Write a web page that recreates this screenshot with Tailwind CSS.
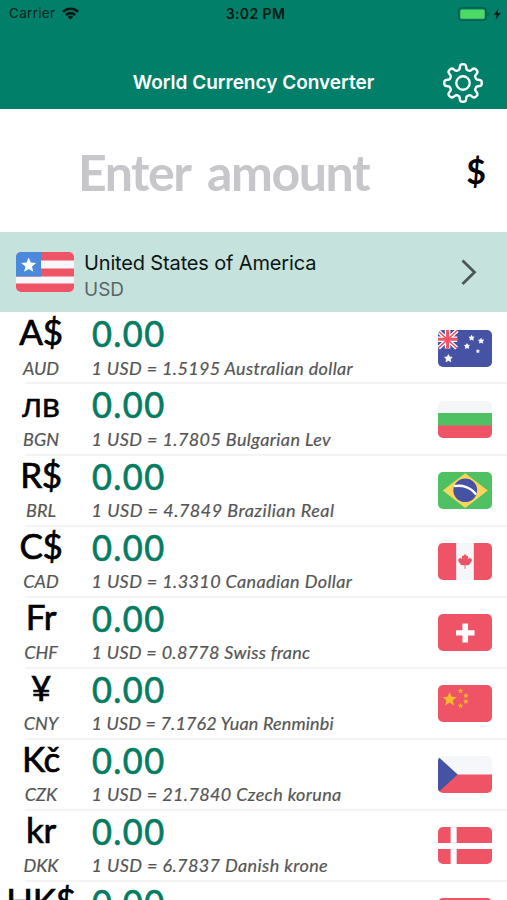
<!DOCTYPE html>
<html lang="en">
<head>
    <meta charset="UTF-8">
    <meta name="viewport" content="width=device-width, initial-scale=1.0">
    <title>World Currency Converter</title>
    <script src="https://cdn.jsdelivr.net/npm/@tailwindcss/browser@4"></script>
</head>
<body class="bg-white font-['Inter',sans-serif] h-[900px] overflow-hidden flex flex-col">
    <!-- Header -->
    <header class="bg-[#027f68] h-[109px] shrink-0 flex flex-col">
        <!-- Status bar -->
        <div class="h-[27px] grid grid-cols-3 items-center pl-[9px] pr-[5px] text-[13.5px] text-[#04251f]">
            <div class="flex items-center gap-[7px]">
                <span class="tracking-[0.3px]">Carrier</span>
                <svg class="w-[17px] h-[13px]" viewBox="0 0 17 13" fill="none" stroke="#031a16" stroke-width="2.6">
                    <path d="M.9 4.9a10.8 10.8 0 0 1 15.2 0"/>
                    <path d="M3.9 8a6.6 6.6 0 0 1 9.2 0"/>
                    <path d="M8.5 12.6 5.8 9.9a3.9 3.9 0 0 1 5.4 0z" fill="#031a16" stroke="none"/>
                </svg>
            </div>
            <span class="text-center font-semibold text-[14px] tracking-[0.4px] whitespace-nowrap text-[#031a16]">3:02 PM</span>
            <div class="flex items-center justify-end">
                <svg class="w-[44px] h-[14px]" viewBox="0 0 44 14">
                    <rect x=".7" y=".9" width="27.4" height="12.4" rx="3" fill="none" stroke="#03594a" stroke-width="1.3"/>
                    <rect x="2.3" y="2.4" width="24.4" height="9.4" rx="1.5" fill="#4cd964"/>
                    <path d="M29.6 5v4.2c1.6-.6 1.6-3.6 0-4.2z" fill="#03594a"/>
                    <path d="M40.6 1.5 35.7 8h3.1l-1.3 4.7 5.2-6.6h-3.2z" fill="#031a16"/>
                </svg>
            </div>
        </div>
        <!-- Title bar -->
        <div class="flex-1 grid grid-cols-[1fr_auto_1fr] items-center pt-[29px]">
            <span></span>
            <h1 class="text-white text-[19px] font-semibold leading-none whitespace-nowrap">World Currency Converter</h1>
            <svg class="w-[42px] h-[42px] justify-self-end mr-[23px]" viewBox="-21 -21 42 42" fill="none" stroke="#fff" stroke-width="2.4" stroke-linejoin="round">
                <circle r="6.7"/>
                <path id="gear"/>
            </svg>
        </div>
    </header>

    <!-- Amount -->
    <section class="h-[123px] shrink-0 flex items-center font-['Lato',sans-serif]">
        <div class="w-[447px] text-center pt-[3px] text-[50px] font-bold text-[#c7c7cb] tracking-[-1.45px] [word-spacing:7px] whitespace-nowrap">Enter amount</div>
        <div class="flex-1 text-center pr-0.5 text-[34px] font-bold text-black">$</div>
    </section>

    <!-- Base currency -->
    <section class="bg-[#c6e2dc] h-20 shrink-0 flex items-center pl-4 pr-[30px]">
        <svg class="w-[58px] h-[40px] rounded-[5px]" viewBox="0 0 58 40">
            <path d="M0 0h58v40H0z" fill="#f7f7fa"/>
            <path d="M0 0h58v8.5H0zM0 16.5h58v8H0zM0 31.5h58V40H0z" fill="#ee5366"/>
            <path d="M0 0h25v24.5H0z" fill="#4a89dc"/>
            <path d="M12.7 5.5l2.1 5 5.3.4-4.1 3.5 1.3 5.3-4.6-2.8-4.6 2.8 1.3-5.3-4.1-3.5 5.3-.4z" fill="#fff"/>
        </svg>
        <div class="flex-1 pl-2.5 pt-[9px]">
            <p class="text-[20px] leading-[27px] tracking-[-0.15px] text-[#0b1513]">United States of America</p>
            <p class="text-[19px] leading-[26px] text-[#5b6765]">USD</p>
        </div>
        <svg class="w-[16px] h-[28px]" viewBox="0 0 16 28" fill="none" stroke="#4c5755" stroke-width="2.8">
            <path d="M1.5 2.5 13.5 14.3 1.5 26"/>
        </svg>
    </section>

    <!-- Rates -->
    <main id="rates" class="flex-1 min-h-0 overflow-hidden pt-[1.4px] font-['Lato',sans-serif]"></main>

    <script>
        // Flag artwork, all drawn on a 54x37 box
        const flags = {
            AUD: '<path d="M0 0h54v37H0z" fill="#4653a5"/><path d="M0 1 18.5 18M19 .5 .5 18" stroke="#fff" stroke-width="4"/><path d="M9.5 0v18.5M0 9.3h19" stroke="#fff" stroke-width="5.5"/><path d="M0 1 18.5 18M19 .5 .5 18" stroke="#ee5366" stroke-width="1.6"/><path d="M9.5 0v18.5M0 9.3h19" stroke="#ee5366" stroke-width="3"/>' +
                '<path d="M10.3 24.6l1.2 2.3 2.6.4-1.9 1.8.5 2.6-2.4-1.3-2.4 1.3.5-2.6-1.9-1.8 2.6-.4z" fill="#fff" stroke="#fff" stroke-width=".7"/><path d="M33.3 5.3l.8 1.6 1.8.2-1.3 1.3.3 1.8-1.6-.9-1.6.9.3-1.8-1.3-1.3 1.8-.2zM42.7 8.3l.8 1.6 1.8.2-1.3 1.3.3 1.8-1.6-.9-1.6.9.3-1.8-1.3-1.3 1.8-.2zM28.7 13.6l.8 1.6 1.8.2-1.3 1.3.3 1.8-1.6-.9-1.6.9.3-1.8-1.3-1.3 1.8-.2z" fill="#fff" stroke="#fff" stroke-width=".7"/><path d="M39.5 19.4l.5 1.1 1.2.2-.9.8.2 1.2-1-.6-1 .6.2-1.2-.9-.8 1.2-.2z" fill="#fff" stroke="#fff" stroke-width=".5"/>',
            BGN: '<path d="M0 0h54v13H0z" fill="#f5f6f8"/><path d="M0 12h54v13H0z" fill="#4fc162"/><path d="M0 24.5h54V37H0z" fill="#ee5366"/>',
            BRL: '<path d="M0 0h54v37H0z" fill="#4fc162"/><path d="M27 1.3 49.3 18.5 27 36 4.7 18.5z" fill="#fbd45c"/><circle cx="27" cy="18.3" r="11.8" fill="#4653a5"/><path d="M16 14.2c8-1.8 17 1.4 21.7 8.3" fill="none" stroke="#fff" stroke-width="2.4"/>',
            CAD: '<path d="M0 0h54v37H0z" fill="#f5f6f8"/><path d="M0 0h18v37H0zM35.5 0H54v37H35.5z" fill="#ee5366"/><path d="M26.8 11l1.8 2 1.3-.3-.2 3.2 1.8-1.2 2.3 2-.9 2.2-2.3 3.1-3.4.2.1 3.6h-1l.1-3.6-3.4-.2-2.3-3.1-.9-2.2 2.3-2 1.8 1.2-.2-3.2 1.3.3z" fill="#ee5366"/>',
            CHF: '<path d="M0 0h54v37H0z" fill="#ee5366"/><path d="M24.2 9.5h5.6v6.7h6.4v5.4h-6.4v6.9h-5.6v-6.9h-6.4v-5.4h6.4z" fill="#fff"/>',
            CNY: '<path d="M0 0h54v37H0z" fill="#ee5366"/><path d="M11.5 7l2 4.7 5.1.4-3.9 3.3 1.2 5-4.4-2.7-4.4 2.7 1.2-5-3.9-3.3 5.1-.4z" fill="#fdb62f"/><path d="M22.3 3.8l.7 1.3 1.5.2-1.1 1 .3 1.5-1.4-.7-1.4.7.3-1.5-1.1-1 1.5-.2zM27.7 8.5l.7 1.3 1.5.2-1.1 1 .3 1.5-1.4-.7-1.4.7.3-1.5-1.1-1 1.5-.2zM27.7 14.3l.7 1.3 1.5.2-1.1 1 .3 1.5-1.4-.7-1.4.7.3-1.5-1.1-1 1.5-.2zM22.3 18.6l.7 1.3 1.5.2-1.1 1 .3 1.5-1.4-.7-1.4.7.3-1.5-1.1-1 1.5-.2z" fill="#fdb62f" stroke="#fdb62f" stroke-width=".5"/>',
            CZK: '<path d="M0 0h54v19H0z" fill="#f5f7fa"/><path d="M0 18.5h54V37H0z" fill="#ee5366"/><path d="M0 .5 19.5 18.5 0 36.5z" fill="#4653a5"/>',
            DKK: '<path d="M0 0h54v37H0z" fill="#ee5366"/><path d="M12.5 0h6v37h-6zM0 16h54v6H0z" fill="#fff"/>',
            HKD: '<path d="M0 0h54v37H0z" fill="#ee5366"/>'
        };

        const rates = [
            { code: 'AUD', symbol: 'A$', text: '1 USD = 1.5195 Australian dollar', track: 'tracking-[0.35px]' },
            { code: 'BGN', symbol: 'лв', text: '1 USD = 1.7805 Bulgarian Lev', track: 'tracking-[0.4px]' },
            { code: 'BRL', symbol: 'R$', text: '1 USD = 4.7849 Brazilian Real', track: 'tracking-[0.5px]' },
            { code: 'CAD', symbol: 'C$', text: '1 USD = 1.3310 Canadian Dollar', track: 'tracking-[0.38px]' },
            { code: 'CHF', symbol: 'Fr', text: '1 USD = 0.8778 Swiss franc', track: 'tracking-[0.3px]' },
            { code: 'CNY', symbol: '¥', text: '1 USD = 7.1762 Yuan Renminbi', track: 'tracking-[0.15px]' },
            { code: 'CZK', symbol: 'Kč', text: '1 USD = 21.7840 Czech koruna', track: 'tracking-[0.37px]' },
            { code: 'DKK', symbol: 'kr', text: '1 USD = 6.7837 Danish krone', track: 'tracking-[0.4px]' },
            { code: 'HKD', symbol: 'HK$', text: '1 USD = 7.8137 Hong Kong dollar', track: 'tracking-[0.3px]' }
        ];

        document.getElementById('rates').innerHTML = rates.map(r =>
            '<div class="h-[71.1px] flex">' +
                '<div class="w-[82px] shrink-0 flex flex-col items-center">' +
                    '<span class="h-[42.4px] text-black whitespace-nowrap ' + (r.code === 'BGN' ? "leading-[42px] text-[34px] font-['Liberation_Sans',sans-serif] [-webkit-text-stroke:0.4px_black]" : 'leading-[37px] text-[35px] tracking-[-0.3px] [-webkit-text-stroke:0.7px_black]') + '">' + r.symbol + '</span>' +
                    '<span class="leading-6 text-[18px] italic text-[#555] [-webkit-text-stroke:0.2px_#555]">' + r.code + '</span>' +
                '</div>' +
                '<div class="pl-[9.5px] flex-1 whitespace-nowrap">' +
                    '<p class="h-[42.4px] leading-[40px] text-[37px] tracking-[1.5px] origin-left scale-x-[0.93] text-[#037c62] [-webkit-text-stroke:0.7px_#037c62]">0.00</p>' +
                    '<p class="leading-6 text-[18px] italic text-[#555] [-webkit-text-stroke:0.2px_#555] ' + r.track + '">' + r.text + '</p>' +
                '</div>' +
                '<svg class="w-[54.5px] h-[37px] rounded-[5px] mt-[16.2px] mr-[15px] shrink-0" viewBox="0 0 54 37" preserveAspectRatio="none">' + flags[r.code] + '</svg>' +
            '</div>' +
            '<div class="-mt-0.5 ml-[25px] h-0.5 bg-[#f4f4f4]"></div>'
        ).join('');

        // Gear outline: eight rounded teeth
        let points = [];
        for (let i = 0; i <= 240; i++) {
            const a = i / 240 * Math.PI * 2;
            const r = 16.2 + 2.6 * Math.tanh(2.2 * Math.cos(8 * a));
            points.push((r * Math.sin(a)).toFixed(2) + ' ' + (-r * Math.cos(a)).toFixed(2));
        }
        document.getElementById('gear').setAttribute('d', 'M' + points.join('L') + 'z');
    </script>
</body>
</html>
